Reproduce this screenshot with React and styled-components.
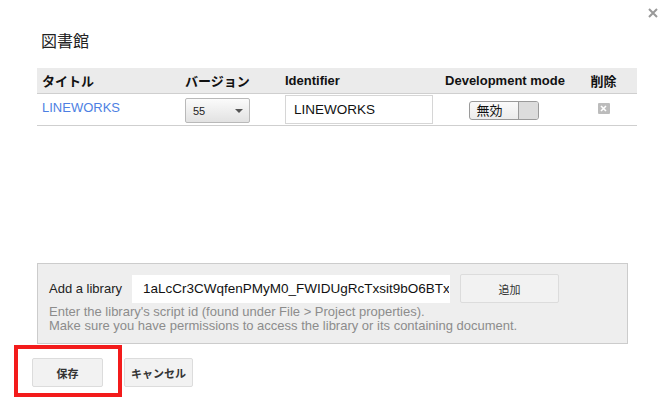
import React from "react";
import styled, { createGlobalStyle } from "styled-components";

const Global = createGlobalStyle`
  html, body { margin: 0; padding: 0; background: #fff; }
  body { font-family: "Liberation Sans", Arial, "Noto Sans CJK JP", sans-serif; color: #222; }
  * { box-sizing: border-box; }
`;

const Dialog = styled.div`
  position: relative;
  width: 662px;
  height: 401px;
  padding: 32px 25px 0 37px;
  display: flex;
  flex-direction: column;
  overflow: hidden;
`;

const Close = styled.button`
  position: absolute;
  top: 8px;
  right: 4px;
  width: 10px;
  height: 10px;
  padding: 0;
  border: 0;
  background: none;
  display: flex;
`;

const Title = styled.h1`
  margin: 0 0 0 4px;
  height: 20px;
  line-height: 20px;
  font-size: 16px;
  font-weight: normal;
  color: #222;
`;

const Table = styled.div`
  margin-top: 16px;
  width: 600px;
  display: grid;
  grid-template-columns: 143px 100px 160px 130px 67px;
`;

const HeadCell = styled.div`
  height: 26px;
  background: #ebebeb;
  border-bottom: 1px solid #cfcfcf;
  font-size: 13px;
  font-weight: bold;
  color: #111;
  display: flex;
  align-items: center;
  justify-content: ${(p) => (p.$center ? "center" : "flex-start")};
  padding-left: ${(p) => (p.$center ? "0" : "5px")};
`;

const Cell = styled.div`
  height: 32px;
  border-bottom: 1px solid #cfcfcf;
  display: flex;
  align-items: center;
  justify-content: ${(p) => (p.$center ? "center" : "flex-start")};
  padding-left: ${(p) => (p.$center ? "0" : "5px")};
`;

const Link = styled.a`
  color: #4d7fe3;
  font-size: 13px;
  text-decoration: none;
  margin-top: -4px;
`;

const Select = styled.div`
  width: 65px;
  height: 25px;
  margin-top: 2px;
  border: 1px solid #b9b9b9;
  border-radius: 2px;
  background: linear-gradient(#fbfbfb, #e2e2e2);
  display: flex;
  align-items: center;
  justify-content: space-between;
  padding: 0 6px 0 7px;
  font-size: 11px;
  color: #222;
`;

const Arrow = styled.span`
  width: 0;
  height: 0;
  border-left: 4px solid transparent;
  border-right: 4px solid transparent;
  border-top: 4px solid #555;
`;

const TextInput = styled.div`
  width: ${(p) => p.$w}px;
  height: ${(p) => p.$h}px;
  background: #fff;
  border: 1px solid ${(p) => p.$border};
  font-size: 13.5px;
  color: #111;
  display: flex;
  align-items: center;
  padding-left: ${(p) => p.$pad}px;
  white-space: nowrap;
  overflow: hidden;
`;

const Toggle = styled.div`
  width: 70px;
  height: 19px;
  margin: 1px 3px 0 0;
  border: 1px solid #9a9a9a;
  border-radius: 3px;
  display: flex;
  overflow: hidden;
  background: linear-gradient(#fafafa, #ececec);
`;

const ToggleLabel = styled.span`
  flex: 1;
  font-size: 13px;
  line-height: 17px;
  padding-left: 7px;
  color: #111;
`;

const Knob = styled.span`
  width: 20px;
  border-left: 1px solid #9a9a9a;
  background: #dcdcdc;
`;

const DeleteIcon = styled.span`
  width: 12px;
  height: 11px;
  border-radius: 1px;
  background: #bcbcbc;
  display: flex;
  align-items: center;
  justify-content: center;
  margin-top: -2px;
`;

const Panel = styled.div`
  margin-top: 137px;
  width: 591px;
  height: 81px;
  background: #eeeeee;
  border: 1px solid #cccccc;
  padding: 10px 0 0 11px;
  display: flex;
  flex-direction: column;
`;

const PanelRow = styled.div`
  display: flex;
  align-items: center;
  height: 29px;
`;

const Label = styled.span`
  font-size: 13px;
  color: #222;
  width: 83px;
`;

const Help = styled.div`
  margin-top: 2px;
  font-size: 13px;
  line-height: 14px;
  color: #8c8c8c;
`;

const Button = styled.button`
  width: ${(p) => p.$w}px;
  height: 29px;
  margin-left: ${(p) => p.$ml || 0}px;
  background: #f2f2f2;
  border: 1px solid #dcdcdc;
  border-radius: 2px;
  font-family: "Liberation Sans", Arial, "Noto Sans CJK JP", sans-serif;
  font-size: 11px;
  font-weight: ${(p) => (p.$bold ? "bold" : "normal")};
  color: #333;
  padding: 0;
`;

const Footer = styled.div`
  margin: 14px 0 0 -5px;
  display: flex;
  gap: 21px;
`;

const Highlight = styled.div`
  position: absolute;
  left: 14px;
  top: 345px;
  width: 108px;
  height: 52px;
  border: 4px solid #f31b1b;
  pointer-events: none;
`;

export default function App() {
  return (
    <>
      <Global />
      <Dialog>
        <Close aria-label="close">
          <svg width="10" height="10" viewBox="0 0 10 10">
            <path d="M1 1L9 9M9 1L1 9" stroke="#999" strokeWidth="2" />
          </svg>
        </Close>
        <Title>図書館</Title>
        <Table>
          <HeadCell>タイトル</HeadCell>
          <HeadCell>バージョン</HeadCell>
          <HeadCell>Identifier</HeadCell>
          <HeadCell $center>Development mode</HeadCell>
          <HeadCell $center>削除</HeadCell>

          <Cell><Link href="#">LINEWORKS</Link></Cell>
          <Cell>
            <Select>
              <span>55</span>
              <Arrow />
            </Select>
          </Cell>
          <Cell>
            <TextInput $w={148} $h={29} $border="#d6d6d6" $pad={8}>LINEWORKS</TextInput>
          </Cell>
          <Cell $center>
            <Toggle>
              <ToggleLabel>無効</ToggleLabel>
              <Knob />
            </Toggle>
          </Cell>
          <Cell $center>
            <DeleteIcon>
              <svg width="7" height="7" viewBox="0 0 7 7">
                <path d="M1 1L6 6M6 1L1 6" stroke="#fff" strokeWidth="1.6" />
              </svg>
            </DeleteIcon>
          </Cell>
        </Table>

        <Panel>
          <PanelRow>
            <Label>Add a library</Label>
            <TextInput $w={318} $h={28} $border="#fff" $pad={10}>
              1aLcCr3CWqfenPMyM0_FWIDUgRcTxsit9bO6BTx6
            </TextInput>
            <Button $w={99} $ml={10}>追加</Button>
          </PanelRow>
          <Help>
            Enter the library's script id (found under File &gt; Project properties).
            <br />
            Make sure you have permissions to access the library or its containing document.
          </Help>
        </Panel>

        <Footer>
          <Button $w={71} $bold>保存</Button>
          <Button $w={69} $bold>キャンセル</Button>
        </Footer>
        <Highlight />
      </Dialog>
    </>
  );
}
